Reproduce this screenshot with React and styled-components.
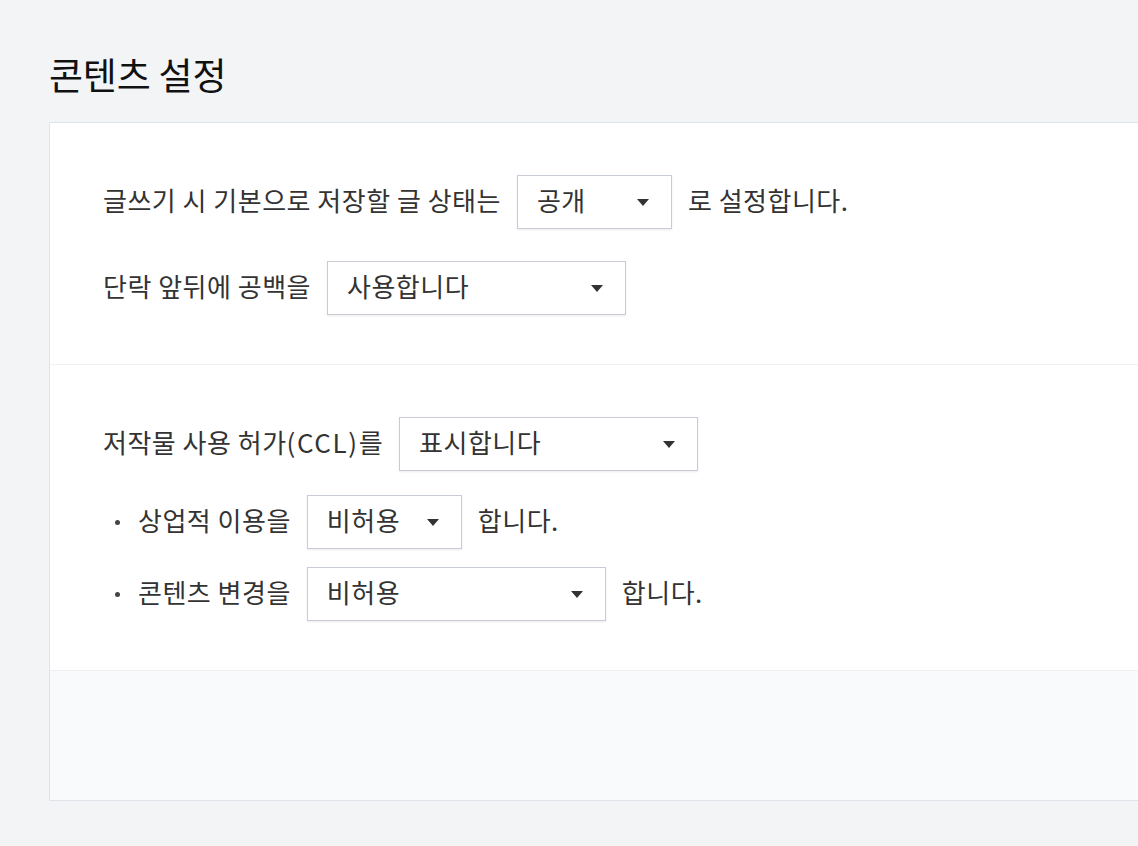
import React from "react";
import styled, { createGlobalStyle } from "styled-components";

const Global = createGlobalStyle`
  html, body { margin: 0; padding: 0; }
  body {
    background: #f3f4f6;
    font-family: "Noto Sans CJK KR", "Noto Sans", sans-serif;
    overflow: hidden;
  }
`;

const Page = styled.div`
  padding: 52px 0 0 49px;
  min-height: 846px;
  box-sizing: border-box;
`;

const Title = styled.h2`
  margin: 0 0 26px;
  font-size: 37px;
  line-height: 44px;
  font-weight: 400;
  color: #111;
  letter-spacing: -0.2px;
`;

const Card = styled.div`
  width: 1140px;
  background: #fff;
  border: 1px solid #dfe3ea;
  box-sizing: border-box;
`;

const Section = styled.div`
  display: flex;
  flex-direction: column;
  padding: 52px 53px 49px;
  border-bottom: 1px solid #eef0f4;
`;

const Row = styled.div`
  display: flex;
  align-items: center;
  gap: 16px;
  margin-top: ${(p) => p.$mt || 0}px;
  font-size: 26px;
  line-height: 34px;
  color: #333;
  letter-spacing: 0.5px;
`;

const Label = styled.span`
  display: flex;
  align-items: center;
  white-space: nowrap;
  padding-bottom: 4px;
`;

const Latin = styled.span`
  letter-spacing: 1.6px;
`;

const Bullet = styled.span`
  width: 5px;
  height: 5px;
  border-radius: 50%;
  background: #444;
  margin: 4px 18px 0 12px;
`;

const SelectBox = styled.div`
  box-sizing: border-box;
  width: ${(p) => p.$w}px;
  height: 54px;
  border: 1px solid #c8ccd7;
  box-shadow: 0 1px 2px rgba(0, 0, 0, 0.08);
  background: #fff;
  display: flex;
  align-items: center;
  justify-content: space-between;
  padding: 0 22px 4px 19px;
  color: #333;
`;

const Caret = styled.svg`
  width: 12px;
  height: 7px;
  display: block;
  margin-top: 4px;
`;

const Footer = styled.div`
  height: 129px;
  background: #f9fafb;
`;

const Select = ({ w, children }) => (
  <SelectBox $w={w}>
    <span>{children}</span>
    <Caret viewBox="0 0 12 7">
      <path d="M0 0h12L6 7z" fill="#333" />
    </Caret>
  </SelectBox>
);

export default function App() {
  return (
    <>
      <Global />
      <Page>
        <Title>콘텐츠 설정</Title>
        <Card>
          <Section>
            <Row>
              <Label>글쓰기 시 기본으로 저장할 글 상태는</Label>
              <Select w={155}>공개</Select>
              <Label>로 설정합니다.</Label>
            </Row>
            <Row $mt={32}>
              <Label>단락 앞뒤에 공백을</Label>
              <Select w={299}>사용합니다</Select>
            </Row>
          </Section>
          <Section>
            <Row>
              <Label>
                저작물 사용 허가<Latin>(CCL)</Latin>를
              </Label>
              <Select w={299}>표시합니다</Select>
            </Row>
            <Row $mt={24}>
              <Label>
                <Bullet />
                상업적 이용을
              </Label>
              <Select w={155}>비허용</Select>
              <Label>합니다.</Label>
            </Row>
            <Row $mt={18}>
              <Label>
                <Bullet />
                콘텐츠 변경을
              </Label>
              <Select w={299}>비허용</Select>
              <Label>합니다.</Label>
            </Row>
          </Section>
          <Footer />
        </Card>
      </Page>
    </>
  );
}
